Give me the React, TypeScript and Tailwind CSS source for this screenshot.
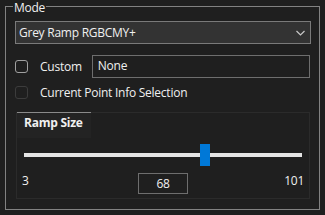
import React from "react";

const MIN = 3;
const MAX = 101;
const VALUE = 68;

const Checkbox: React.FC<{ disabled?: boolean }> = ({ disabled }) => (
    <div
        className={
            disabled
                ? "w-[13px] h-[13px] rounded-[3px] border border-[#3c3c3c] bg-[#1f1f1f] shrink-0"
                : "w-[13px] h-[13px] rounded-[3px] border border-[#a0a0a0] bg-[#1f1f1f] shrink-0"
        }
    />
);

const App: React.FC = () => {
    // thumb travels a bit less than the full track (win slider inset)
    const pct = (VALUE - MIN) / (MAX - MIN);
    const thumbLeft = Math.round(pct * 265);

    return (
        <div className="w-[325px] h-[215px] bg-[#1f1f1f] font-['Open_Sans',sans-serif] text-[12px] tracking-[-0.25px] text-[#f0f0f0] overflow-hidden pt-[6px] pl-[5px]">
            <div className="relative w-[315px] h-[204px] border border-[#828282] px-[9px] pt-[14px]">
                <span className="absolute left-[7px] -top-[7px] px-[1px] leading-[16px] bg-[#1f1f1f]">Mode</span>

                {/* dropdown */}
                <div className="w-[296px] h-[23px] border border-[#7a7a7a] bg-[#333333] flex items-center justify-between pl-[3px] pr-[5px]">
                    <span className="leading-[16px]">Grey Ramp RGBCMY+</span>
                    <svg width="9" height="6" viewBox="0 0 9 6">
                        <path d="M0.5 1 L4.5 5 L8.5 1" fill="none" stroke="#c8c8c8" strokeWidth="1.2" />
                    </svg>
                </div>

                {/* custom row */}
                <div className="mt-[11px] flex items-center h-[23px]">
                    <Checkbox />
                    <span className="ml-[12px] w-[52px]">Custom</span>
                    <div className="w-[219px] h-[23px] border border-[#6e6e6e] bg-[#1f1f1f] flex items-center pl-[5px] pb-[2px]">
                        None
                    </div>
                </div>

                {/* current point row */}
                <div className="mt-[8px] flex items-center h-[13px]">
                    <Checkbox disabled />
                    <span className="ml-[12px]">Current Point Info Selection</span>
                </div>

                {/* ramp size group */}
                <div className="mt-[13px] ml-[1px] w-[294px] h-[87px] border-l border-r border-b border-[#2b2b2b] flex flex-col">
                    <div className="flex">
                        <div className="w-[74px] h-[26px] border-t border-[#8a8a8a] bg-[#232323] pl-[7px] pt-[2px] font-bold leading-[16px]">
                            Ramp Size
                        </div>
                        <div className="flex-1 border-t border-[#2b2b2b]" />
                    </div>

                    <div className="mt-[6px] ml-[7px] w-[278px] h-[22px] relative flex items-center">
                        <div className="w-full h-[4px] bg-[#e4e4e4]" />
                        <div
                            className="absolute top-0 w-[10px] h-[22px] bg-[#0078d7]"
                            style={{ left: thumbLeft }}
                        />
                    </div>

                    <div className="mt-[6px] px-[5px] grid grid-cols-[1fr_auto_1fr] items-center">
                        <span className="pb-[5px]">{MIN}</span>
                        <div className="w-[50px] h-[21px] border border-[#6e6e6e] flex items-center justify-center">
                            {VALUE}
                        </div>
                        <span className="text-right pb-[5px]">{MAX}</span>
                    </div>
                </div>
            </div>
        </div>
    );
};

export default App;
